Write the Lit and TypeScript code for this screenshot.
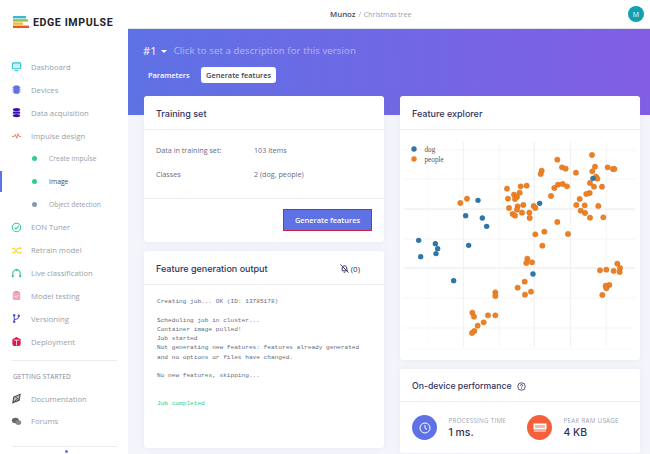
import {LitElement, html, css, svg} from 'lit';
import {customElement} from 'lit/decorators.js';

// scatter points read off the 3x crops, [x, y] relative to the crop origin
const dogsTop = [[249,334],[434,343],[212,380],[262,387],[275,412],[594,268]];
const peopleTop = [[591,198],[487,212],[501,235],[512,239],[543,251],[600,233],[592,247],[638,235],[654,240],[658,240],[440,245],[437,255],[603,263],[607,269],[585,282],[597,293],[621,293],[395,290],[377,292],[336,299],[489,287],[503,285],[516,292],[478,297],[374,311],[357,317],[366,324],[360,330],[339,329],[468,321],[584,312],[574,315],[554,330],[216,329],[196,342],[544,348],[569,349],[610,351],[342,357],[368,352],[366,362],[385,348],[416,351],[421,357],[403,371],[404,387],[353,375],[360,380],[381,371],[557,365],[570,372],[585,386],[625,385],[487,399]];
const dogsBottom = [[71,49],[121,59],[128,74],[123,89],[77,98],[221,64],[176,170],[414,150]];
const peopleBottom = [[421,31],[448,23],[519,30],[442,65],[397,104],[394,117],[411,115],[389,173],[368,191],[408,203],[390,212],[301,205],[301,216],[232,266],[237,278],[279,274],[301,274],[266,295],[248,305],[238,321],[231,327],[667,119],[675,132],[615,139],[634,137],[656,141],[674,144],[643,183],[632,185],[634,193],[622,213]];

const toPage = (pts: number[][], oy: number) => pts.map(([x, y]) => [x / 3 + 395, y / 3 + oy]);
const dogs = [...toPage(dogsTop, 90), ...toPage(dogsBottom, 225)];
const people = [...toPage(peopleTop, 90), ...toPage(peopleBottom, 225)];

const icons: Record<string, unknown> = {
  dashboard: svg`<rect x="1.5" y="2" width="9" height="6.5" rx="1" fill="#c9f1f5" stroke="#2cc5d2" stroke-width="1.2"/><path d="M4 10.5h4" stroke="#2cc5d2" stroke-width="1.2"/>`,
  devices: svg`<rect x="2.5" y="1.5" width="7" height="9" rx="2" fill="#5e72e4"/><path d="M1 4h1.5M1 6h1.5M1 8h1.5M9.5 4H11M9.5 6H11M9.5 8H11" stroke="#a9b4f0" stroke-width=".8"/>`,
  data: svg`<ellipse cx="6" cy="2.8" rx="4" ry="1.8" fill="#3b10a8"/><rect x="2" y="4.8" width="8" height="2.6" rx="1" fill="#3b10a8"/><ellipse cx="6" cy="9.3" rx="4" ry="1.8" fill="#3b10a8"/>`,
  impulse: svg`<path d="M1 7h2.5l1.2-2 1.6 4 1.4-5 1.2 3H11" fill="none" stroke="#f0624d" stroke-width=".9"/>`,
  eon: svg`<circle cx="6" cy="6" r="4.6" fill="none" stroke="#2dce89" stroke-width="1.1"/><path d="M3.8 6.2l1.6 1.4 3-3.4" fill="none" stroke="#2dce89" stroke-width="1.1"/>`,
  retrain: svg`<path d="M1 3.5h2.5l4 5H11M1 8.5h2.5l4-5H11" fill="none" stroke="#f5d327" stroke-width="1.2"/><path d="M9.5 2l2 1.5-2 1.5zM9.5 7l2 1.5-2 1.5z" fill="#f5d327"/>`,
  live: svg`<path d="M2 10V7a4 4 0 0 1 8 0v3" fill="none" stroke="#2bb59a" stroke-width="1.1"/><circle cx="2" cy="10" r="1.1" fill="#2bb59a"/><circle cx="10" cy="10" r="1.1" fill="#2bb59a"/><circle cx="6" cy="3" r="1.1" fill="#2bb59a"/>`,
  testing: svg`<rect x="2" y="2" width="8" height="9" rx="1" fill="#f0a8b8"/><rect x="4.2" y="1" width="3.6" height="2" fill="#e88aa0"/><path d="M4 6.5l1.5 1.5 2.5-2.5" fill="none" stroke="#fff" stroke-width=".9"/>`,
  versioning: svg`<path d="M3.5 2.5v7M3.5 7c3 0 5-1 5-4" fill="none" stroke="#4a55c8" stroke-width="1.1"/><circle cx="3.5" cy="2.5" r="1.3" fill="#4a55c8"/><circle cx="3.5" cy="9.5" r="1.3" fill="#4a55c8"/><circle cx="8.5" cy="3" r="1.3" fill="#4a55c8"/>`,
  deploy: svg`<path d="M6 1l4.5 2.5v5.2a2.3 2.3 0 0 1-2.3 2.3H3.8a2.3 2.3 0 0 1-2.3-2.3V3.5z" fill="#e0174f"/><path d="M3 4.5h6M6 4.5v6" stroke="#fff" stroke-width=".8"/>`,
  docs: svg`<path d="M2 10.5l1-6 7-3-1.2 6.5z" fill="#bbb" stroke="#444" stroke-width="1.1"/><path d="M2 10.5l5-4M4 3.5l5 4" stroke="#444" stroke-width=".9"/>`,
  forums: svg`<ellipse cx="4.8" cy="4.8" rx="3.8" ry="3" fill="#666"/><ellipse cx="8" cy="7.2" rx="3.2" ry="2.5" fill="#888"/>`,
};

const mainNav = [
  ['dashboard', 'Dashboard'],
  ['devices', 'Devices'],
  ['data', 'Data acquisition'],
  ['impulse', 'Impulse design'],
];
const subNav = [
  ['Create impulse', '#2dce89', false],
  ['Image', '#2dce89', true],
  ['Object detection', '#8898aa', false],
];
const lowerNav = [
  ['eon', 'EON Tuner'],
  ['retrain', 'Retrain model'],
  ['live', 'Live classification'],
  ['testing', 'Model testing'],
  ['versioning', 'Versioning'],
  ['deploy', 'Deployment'],
];

const log = `Creating job... OK (ID: 13785178)

Scheduling job in cluster...
Container image pulled!
Job started
Not generating new features: features already generated
and no options or files have changed.

No new features, skipping...


`;

@customElement('app-root')
export class AppRoot extends LitElement {
  static styles = css`
    :host {
      display: grid;
      grid-template-columns: 128px 1fr;
      height: 454px;
      overflow: hidden;
      background: #f3f5fb;
      font-family: 'Open Sans', sans-serif;
      color: #656d84;
    }

    .sidebar {
      background: #fff;
      overflow: hidden;
    }

    .logo {
      height: 55.5px;
      padding: 16px 0 0 13px;
      box-sizing: border-box;
      display: flex;
      align-items: flex-start;
      gap: 4px;
      font: 700 10.6px Roboto, sans-serif;
      letter-spacing: 0.6px;
      color: #22232b;
      line-height: 13px;
    }

    .item {
      height: 22.9px;
      display: flex;
      align-items: center;
      gap: 9px;
      padding-left: 11px;
      font-size: 7.7px;
      color: #999eaa;
      white-space: nowrap;
    }

    .item svg {
      width: 11px;
      height: 11px;
      flex: none;
    }

    .sub {
      position: relative;
      padding-left: 32px;
      gap: 12px;
      font-size: 6.75px;
    }

    .sub.active {
      color: #444b5e;
    }

    .sub.active::before {
      content: '';
      position: absolute;
      left: 0;
      top: 1px;
      bottom: 1px;
      width: 1.5px;
      background: #5e72e4;
    }

    .dot {
      width: 5px;
      height: 5px;
      border-radius: 50%;
      flex: none;
    }

    .rule {
      height: 1px;
      background: #e9ecef;
      margin: 7px 11px 0 12px;
    }

    .rule.last {
      margin-top: 13px;
    }

    .navTitle {
      font-size: 6.4px;
      letter-spacing: 0.2px;
      color: #7d8696;
      padding: 10.5px 0 5.5px 13px;
      line-height: 10px;
    }

    .more {
      width: 3px;
      height: 3px;
      margin: 3px 0 0 64.5px;
      border-radius: 50%;
      background: #5e72e4;
    }

    .topbar {
      height: 28px;
      background: #fff;
      border-bottom: 1px solid #e4e6ee;
      display: flex;
      align-items: center;
      padding-right: 6px;
      font-size: 7px;
      color: #999eaa;
    }

    .crumb {
      margin-left: 202px;
      flex: 1;
      word-spacing: -0.4px;
    }

    .crumb b {
      color: #444b5e;
      font-weight: 600;
      font-size: 7.8px;
    }

    .avatar {
      width: 16px;
      height: 16px;
      border-radius: 50%;
      background: #10a0b0;
      color: #e6fbfd;
      font-size: 7px;
      display: flex;
      align-items: center;
      justify-content: center;
    }

    .hero {
      height: 86px;
      box-sizing: border-box;
      padding: 14px 0 0 15px;
      background: linear-gradient(87deg, #5e72e4 0, #825ee4 100%);
      color: #fff;
    }

    .version {
      display: flex;
      align-items: center;
      font-size: 11.2px;
      line-height: 16px;
    }

    .version span {
      font-size: 9.55px;
      color: rgba(255, 255, 255, 0.5);
      margin-left: 7px;
      letter-spacing: 0.12px;
    }

    .caret {
      width: 0;
      height: 0;
      margin-left: 4px;
      border: 3px solid transparent;
      border-top: 3px solid #fff;
      border-bottom: 0;
    }

    .tabs {
      display: flex;
      align-items: center;
      gap: 6.5px;
      margin-top: 8px;
      font-size: 7.4px;
      font-weight: 600;
    }

    .tabs div {
      padding: 0 5px;
      line-height: 16px;
      border-radius: 3px;
    }

    .tabs .on {
      background: #fff;
      color: #3d4560;
    }

    .columns {
      display: grid;
      grid-template-columns: 240px 240px;
      gap: 16px;
      margin: -19px 0 0 16px;
    }

    .column {
      display: flex;
      flex-direction: column;
      gap: 9px;
    }

    .card {
      background: #fff;
      border-radius: 3px;
      box-shadow: 0 0 6px rgba(136, 152, 170, 0.1);
    }

    .head {
      height: 34px;
      box-sizing: border-box;
      border-bottom: 1px solid #edeff3;
      padding: 1px 12px 0;
      display: flex;
      align-items: center;
      font: 500 9px Inter, sans-serif;
      color: #32325d;
    }

    .head .mute {
      margin-left: auto;
      margin-right: 12px;
      display: flex;
      align-items: center;
      gap: 1px;
      font: 8px 'Open Sans', sans-serif;
      color: #32325d;
    }

    .rows {
      height: 69px;
      box-sizing: border-box;
      padding: 8px 12px 0;
      border-bottom: 1px solid #edeff3;
      font-size: 7.2px;
      line-height: 24px;
      display: grid;
      grid-template-columns: 98px 1fr;
      align-content: start;
    }

    .foot {
      height: 43px;
      display: flex;
      justify-content: flex-end;
      align-items: flex-start;
      padding: 10px 12px 0 0;
      box-sizing: border-box;
    }

    .primary {
      width: 89px;
      height: 22px;
      box-sizing: border-box;
      background: #5e72e4;
      border: 1.5px solid #c8234c;
      color: #fff;
      font: 600 7.4px 'Open Sans', sans-serif;
      padding: 0;
    }

    .output {
      height: 197px;
    }

    .console {
      margin: 0;
      padding: 12px 13px 0;
      font: 6.14px/9.25px 'Liberation Mono', monospace;
      color: #666c7a;
      white-space: pre;
    }

    .console em {
      font-style: normal;
      color: #2dce89;
    }

    .explorer {
      height: 264px;
    }

    .explorer svg {
      display: block;
      width: 240px;
      height: 229px;
    }

    .explorer text {
      font: 7.2px 'Liberation Serif', serif;
      fill: #555;
    }

    .perf {
      height: 84px;
    }

    .perf .head {
      height: 33px;
      gap: 5px;
      font-size: 8.7px;
      padding-top: 2px;
    }

    .stats {
      display: grid;
      grid-template-columns: 115px 1fr;
      padding: 12px 12px 0;
    }

    .stat {
      display: flex;
      align-items: center;
      gap: 11.5px;
    }

    .badge {
      width: 25px;
      height: 25px;
      border-radius: 50%;
      display: flex;
      align-items: center;
      justify-content: center;
    }

    .label {
      font-size: 6.2px;
      letter-spacing: 0.3px;
      color: #98a4b3;
      line-height: 9px;
      margin-top: 2px;
    }

    .value {
      font: 500 10.4px/16px Inter, sans-serif;
      color: #32325d;
    }
  `;

  navItem(key: string, label: string) {
    return html`<div class="item">
      <svg viewBox="0 0 12 12">${icons[key]}</svg>${label}
    </div>`;
  }

  renderSidebar() {
    return html`<nav class="sidebar">
      <div class="logo">
        <svg width="16" height="12" viewBox="0 0 16 12">
          <rect x="0" y="0" width="13" height="2.4" fill="#3fb6c9"/>
          <rect x="0" y="3.2" width="15" height="2.4" fill="#8cc152"/>
          <rect x="0" y="6.4" width="10" height="2.4" fill="#f5b82e"/>
          <rect x="0" y="9.6" width="16" height="2.4" fill="#e8552f"/>
        </svg>
        EDGE IMPULSE
      </div>
      ${mainNav.map(([k, l]) => this.navItem(k, l))}
      ${subNav.map(
        ([l, c, on]) => html`<div class="item sub ${on ? 'active' : ''}">
          <span class="dot" style="background:${c}"></span>${l}
        </div>`
      )}
      ${lowerNav.map(([k, l]) => this.navItem(k, l))}
      <div class="rule"></div>
      <div class="navTitle">GETTING STARTED</div>
      ${this.navItem('docs', 'Documentation')} ${this.navItem('forums', 'Forums')}
      <div class="rule last"></div>
      <div class="more"></div>
    </nav>`;
  }

  renderChart() {
    const vLines = [[428, 0.5], [463.3, 1], [499.3, 0.7], [534.3, 1.3], [570.7, 1], [606.3, 0.7]];
    const hLines = [[151, 0.7], [180, 0.7], [210, 1.3], [240, 0.7], [269, 1.3], [299, 0.7], [329, 0.7], [350, 0.5]];
    return html`<svg viewBox="400 131 240 229">
      ${vLines.map(([x, w]) => svg`<line x1=${x} x2=${x} y1="143" y2="348" stroke="#f0f1f4" stroke-width=${w}/>`)}
      ${hLines.map(([y, w]) => svg`<line x1="404" x2="635" y1=${y} y2=${y} stroke="#f0f1f4" stroke-width=${w}/>`)}
      ${people.map(([x, y]) => svg`<circle cx=${x} cy=${y} r="2.7" fill="#ee8022" stroke="#c96f22" stroke-width=".4"/>`)}
      ${dogs.map(([x, y]) => svg`<circle cx=${x} cy=${y} r="2.7" fill="#2f76a8"/>`)}
      <circle cx="414" cy="150" r="2.7" fill="#2f76a8"/>
      <circle cx="414" cy="160" r="2.7" fill="#ee8022"/>
      <text x="424.5" y="152.5">dog</text>
      <text x="424.5" y="162.5">people</text>
    </svg>`;
  }

  render() {
    return html`
      ${this.renderSidebar()}
      <main>
        <div class="topbar">
          <div class="crumb"><b>Munoz</b> &nbsp;/&nbsp; Christmas tree</div>
          <div class="avatar">M</div>
        </div>
        <div class="hero">
          <div class="version">
            #1<i class="caret"></i><span>Click to set a description for this version</span>
          </div>
          <div class="tabs">
            <div>Parameters</div>
            <div class="on">Generate features</div>
          </div>
        </div>
        <div class="columns">
          <div class="column">
            <section class="card training">
              <div class="head">Training set</div>
              <div class="rows">
                <div>Data in training set:</div><div>103 items</div>
                <div>Classes</div><div>2 (dog, people)</div>
              </div>
              <div class="foot"><button class="primary">Generate features</button></div>
            </section>
            <section class="card output">
              <div class="head">
                Feature generation output
                <span class="mute">
                  <svg width="11" height="11" viewBox="0 0 12 12" fill="none" stroke="#32325d" stroke-width="1">
                    <path d="M3.5 8.5V5.5a2.5 2.5 0 0 1 4.5-1.5l1 4.5zM5 10h2M1.5 1.5l9 9"/>
                  </svg>
                  (0)
                </span>
              </div>
              <pre class="console">${log}<em>Job completed</em></pre>
            </section>
          </div>
          <div class="column">
            <section class="card explorer">
              <div class="head">Feature explorer</div>
              ${this.renderChart()}
            </section>
            <section class="card perf">
              <div class="head">
                On-device performance
                <svg width="9" height="9" viewBox="0 0 12 12" fill="none" stroke="#32325d" stroke-width="1.1">
                  <circle cx="6" cy="6" r="5"/>
                  <path d="M4.5 4.8a1.5 1.5 0 1 1 2.2 1.3c-.5.3-.7.6-.7 1.1M6 8.4v.9"/>
                </svg>
              </div>
              <div class="stats">
                <div class="stat">
                  <div class="badge" style="background:#5e72e4">
                    <svg width="12" height="12" viewBox="0 0 12 12" fill="none" stroke="#fff" stroke-width="1">
                      <circle cx="6" cy="6" r="5"/><path d="M6 3v3.2l2 1.2"/>
                    </svg>
                  </div>
                  <div>
                    <div class="label">PROCESSING TIME</div>
                    <div class="value">1 ms.</div>
                  </div>
                </div>
                <div class="stat">
                  <div class="badge" style="background:#f5603a">
                    <svg width="14" height="9" viewBox="0 0 14 9">
                      <rect x="0.5" y="0.5" width="13" height="6" fill="#fff"/>
                      <path d="M3 2v3M5 2v3M7 2v3M9 2v3M11 2v3" stroke="#f5603a" stroke-width=".9"/>
                      <path d="M1 8h12" stroke="#fff" stroke-width="1"/>
                    </svg>
                  </div>
                  <div>
                    <div class="label">PEAK RAM USAGE</div>
                    <div class="value">4 KB</div>
                  </div>
                </div>
              </div>
            </section>
          </div>
        </div>
      </main>
    `;
  }
}
